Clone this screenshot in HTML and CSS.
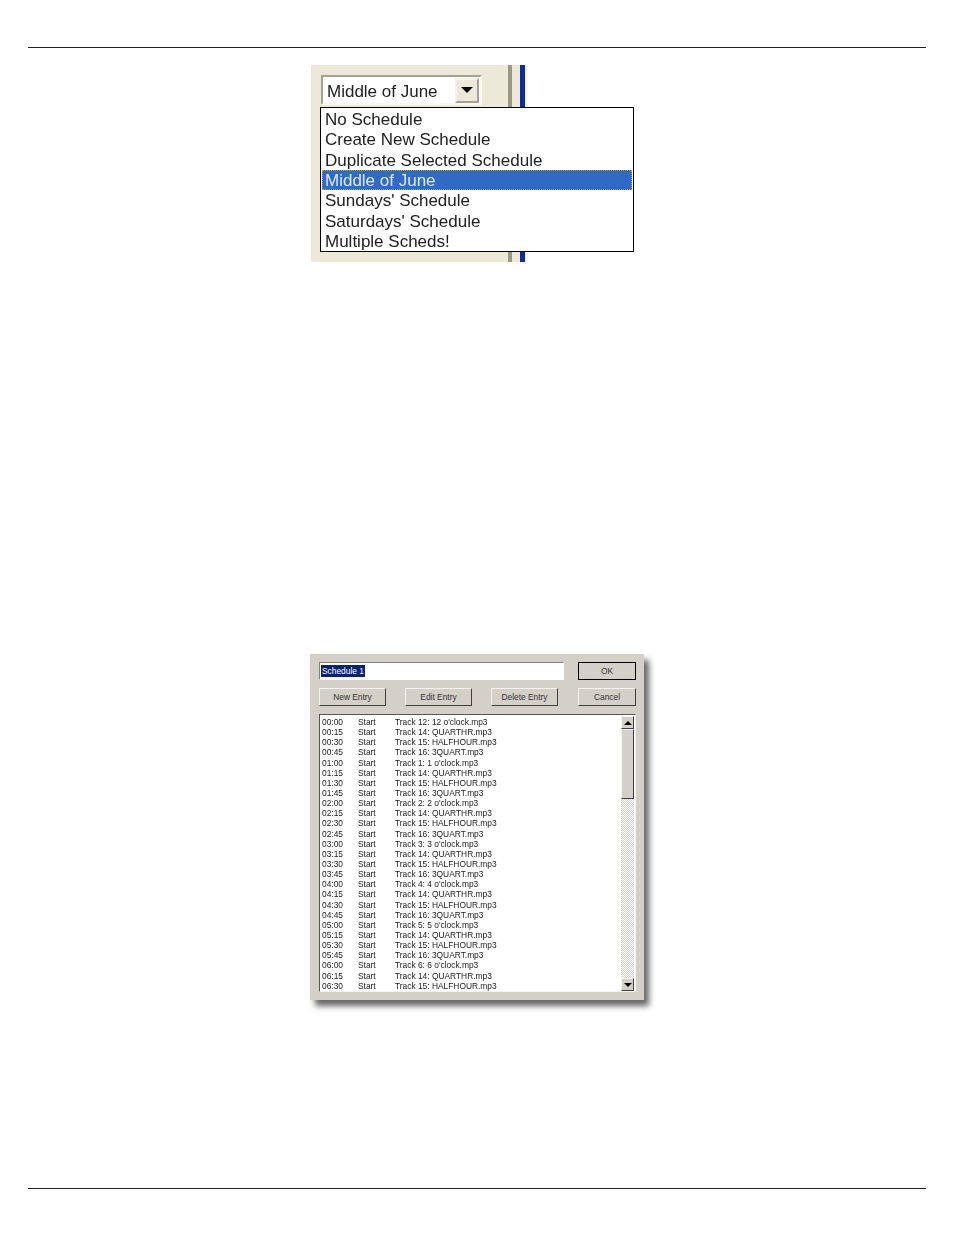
FILE: index.html
```html
<!DOCTYPE html>
<html lang="en">
<head>
    <meta charset="UTF-8">
    <title>Schedules</title>
    <link rel="stylesheet" href="styles.css">
</head>
<body>
    <div class="page">
        <hr class="rule rule-top">

        <!-- Schedule dropdown -->
        <div class="shot-dropdown">
            <div class="panel">
                <div class="combo">
                    <span class="combo-text">Middle of June</span>
                    <span class="combo-btn"><span class="arrow-down"></span></span>
                </div>
            </div>
            <div class="divider"></div>
            <div class="blue-line"></div>
            <ul class="popup">
                <li>No Schedule</li>
                <li>Create New Schedule</li>
                <li>Duplicate Selected Schedule</li>
                <li class="selected">Middle of June</li>
                <li>Sundays' Schedule</li>
                <li>Saturdays' Schedule</li>
                <li>Multiple Scheds!</li>
            </ul>
        </div>

        <!-- Schedule editor dialog -->
        <div class="dialog">
            <div class="dialog-row">
                <div class="name-input"><span class="name-selected">Schedule 1</span></div>
                <button class="btn btn-default">OK</button>
            </div>
            <div class="dialog-row">
                <div class="entry-btns">
                    <button class="btn btn-entry">New Entry</button>
                    <button class="btn btn-entry">Edit Entry</button>
                    <button class="btn btn-entry">Delete Entry</button>
                </div>
                <button class="btn">Cancel</button>
            </div>
            <div class="list-box">
                <div class="rows">
                    <div class="row"><span>00:00</span><span>Start</span><span>Track 12: 12 o'clock.mp3</span></div>
                    <div class="row"><span>00:15</span><span>Start</span><span>Track 14: QUARTHR.mp3</span></div>
                    <div class="row"><span>00:30</span><span>Start</span><span>Track 15: HALFHOUR.mp3</span></div>
                    <div class="row"><span>00:45</span><span>Start</span><span>Track 16: 3QUART.mp3</span></div>
                    <div class="row"><span>01:00</span><span>Start</span><span>Track 1: 1 o'clock.mp3</span></div>
                    <div class="row"><span>01:15</span><span>Start</span><span>Track 14: QUARTHR.mp3</span></div>
                    <div class="row"><span>01:30</span><span>Start</span><span>Track 15: HALFHOUR.mp3</span></div>
                    <div class="row"><span>01:45</span><span>Start</span><span>Track 16: 3QUART.mp3</span></div>
                    <div class="row"><span>02:00</span><span>Start</span><span>Track 2: 2 o'clock.mp3</span></div>
                    <div class="row"><span>02:15</span><span>Start</span><span>Track 14: QUARTHR.mp3</span></div>
                    <div class="row"><span>02:30</span><span>Start</span><span>Track 15: HALFHOUR.mp3</span></div>
                    <div class="row"><span>02:45</span><span>Start</span><span>Track 16: 3QUART.mp3</span></div>
                    <div class="row"><span>03:00</span><span>Start</span><span>Track 3: 3 o'clock.mp3</span></div>
                    <div class="row"><span>03:15</span><span>Start</span><span>Track 14: QUARTHR.mp3</span></div>
                    <div class="row"><span>03:30</span><span>Start</span><span>Track 15: HALFHOUR.mp3</span></div>
                    <div class="row"><span>03:45</span><span>Start</span><span>Track 16: 3QUART.mp3</span></div>
                    <div class="row"><span>04:00</span><span>Start</span><span>Track 4: 4 o'clock.mp3</span></div>
                    <div class="row"><span>04:15</span><span>Start</span><span>Track 14: QUARTHR.mp3</span></div>
                    <div class="row"><span>04:30</span><span>Start</span><span>Track 15: HALFHOUR.mp3</span></div>
                    <div class="row"><span>04:45</span><span>Start</span><span>Track 16: 3QUART.mp3</span></div>
                    <div class="row"><span>05:00</span><span>Start</span><span>Track 5: 5 o'clock.mp3</span></div>
                    <div class="row"><span>05:15</span><span>Start</span><span>Track 14: QUARTHR.mp3</span></div>
                    <div class="row"><span>05:30</span><span>Start</span><span>Track 15: HALFHOUR.mp3</span></div>
                    <div class="row"><span>05:45</span><span>Start</span><span>Track 16: 3QUART.mp3</span></div>
                    <div class="row"><span>06:00</span><span>Start</span><span>Track 6: 6 o'clock.mp3</span></div>
                    <div class="row"><span>06:15</span><span>Start</span><span>Track 14: QUARTHR.mp3</span></div>
                    <div class="row"><span>06:30</span><span>Start</span><span>Track 15: HALFHOUR.mp3</span></div>
                </div>
                <div class="scrollbar">
                    <div class="scroll-btn"><span class="tri-up"></span></div>
                    <div class="scroll-thumb"></div>
                    <div class="scroll-track"></div>
                    <div class="scroll-btn"><span class="tri-down"></span></div>
                </div>
            </div>
        </div>

        <hr class="rule rule-bottom">
    </div>
</body>
</html>
```

FILE: styles.css
```css
body {
    margin: 0;
    background-color: #fff;
    font-family: 'Liberation Sans', Arial, sans-serif;
    color: #000;
}
.page {
    height: 1235px;
    padding: 47px 28px 0;
    box-sizing: border-box;
    overflow: hidden;
}
.rule {
    height: 1px;
    margin: 0;
    border: 0;
    background-color: #222;
}
.rule-bottom {
    margin-top: 188px;
}

/* dropdown screenshot */
.shot-dropdown {
    position: relative;
    display: flex;
    width: 214px;
    height: 197px;
    margin: 17px 0 0 283px;
    background-color: #ece9d8;
}
.panel {
    width: 197px;
    padding: 10px 0 0 10px;
    box-sizing: border-box;
}
.divider {
    width: 4px;
    background-color: #9a9888;
    margin-right: 8px;
}
.blue-line {
    width: 5px;
    background-color: #0a2aa8;
}
.combo {
    display: flex;
    align-items: center;
    justify-content: space-between;
    width: 161px;
    height: 30px;
    padding: 0 1px 0 4px;
    box-sizing: border-box;
    border: 2px solid;
    border-color: #a3a194 #f8f7f0 #f8f7f0 #a3a194;
    background-color: #fff;
    font-size: 17px;
    color: #222;
}
.combo-text {
    padding-top: 3px;
    filter: blur(0.3px);
}
.combo-btn {
    display: flex;
    align-items: center;
    justify-content: center;
    width: 24px;
    height: 25px;
    box-sizing: border-box;
    border: 2px solid;
    border-color: #f5f4ea #a3a194 #a3a194 #f5f4ea;
    background-color: #ece9d8;
}
.arrow-down {
    width: 0;
    height: 0;
    border: 6px solid transparent;
    border-top: 6px solid #000;
    border-bottom: 0;
}
.popup {
    position: absolute;
    left: 9px;
    top: 42px;
    width: 314px;
    height: 145px;
    margin: 0;
    padding: 1px 1px 0 1px;
    box-sizing: border-box;
    list-style: none;
    border: 1px solid #000;
    background-color: #fff;
    font-size: 17px;
}
.popup li {
    height: 20.35px;
    line-height: 22.35px;
    padding-left: 3px;
    color: #222;
    filter: blur(0.3px);
    white-space: nowrap;
}
.popup .selected {
    background-color: #316ac5;
    color: #dfe8f8;
    outline: 1px dotted #b99a55;
    outline-offset: -1px;
}

/* editor dialog */
.dialog {
    width: 334px;
    height: 346px;
    margin: 392px 0 0 282px;
    padding: 8px 8px 0 9px;
    box-sizing: border-box;
    background-color: #d4d0c8;
    box-shadow: 5px 6px 6px rgba(0, 0, 0, 0.6);
    font-size: 8.4px;
    color: #222;
}
.dialog-row {
    display: flex;
    justify-content: space-between;
    margin-bottom: 8px;
}
.name-input {
    width: 245px;
    height: 18px;
    padding: 2px 1px;
    box-sizing: border-box;
    border: 1px solid;
    border-color: #808080 #fff #fff #808080;
    background-color: #fff;
    line-height: 12px;
}
.name-selected {
    display: inline-block;
    background-color: #0a246a;
    color: #fff;
    padding: 0 1px;
}
.btn {
    width: 58px;
    height: 18px;
    padding: 0;
    border: 1px solid;
    border-color: #f4f3ef #404040 #404040 #f4f3ef;
    background-color: #d4d0c8;
    font-family: inherit;
    font-size: 8.4px;
    color: #333;
}
.btn-default {
    outline: 1px solid #000;
    outline-offset: -1px;
    border-color: #000;
}
.entry-btns {
    display: flex;
    gap: 19px;
}
.btn-entry {
    width: 67px;
}
.list-box {
    display: flex;
    justify-content: space-between;
    height: 278px;
    margin-top: 2px;
    padding: 0 1px 0 2px;
    box-sizing: border-box;
    border: 1px solid;
    border-color: #555 #f4f3ef #f4f3ef #555;
    background-color: #fff;
    overflow: hidden;
}
.rows {
    padding-top: 2px;
    filter: blur(0.2px);
}
.row {
    display: grid;
    grid-template-columns: 36px 37px 1fr;
    height: 10.15px;
    line-height: 10.15px;
    white-space: nowrap;
}
.scrollbar {
    display: flex;
    flex-direction: column;
    width: 13px;
    height: 275px;
    margin-top: 1px;
}
.scroll-btn {
    display: flex;
    align-items: center;
    justify-content: center;
    height: 13px;
    flex-shrink: 0;
    box-sizing: border-box;
    border: 1px solid;
    border-color: #f4f3ef #404040 #404040 #f4f3ef;
    background-color: #d4d0c8;
}
.scroll-thumb {
    height: 70px;
    flex-shrink: 0;
    box-sizing: border-box;
    border: 1px solid;
    border-color: #f4f3ef #404040 #404040 #f4f3ef;
    background-color: #d4d0c8;
}
.scroll-track {
    flex: 1;
    background: repeating-conic-gradient(#d4d0c8 0 25%, #fff 0 50%) 0 0 / 2px 2px;
}
.tri-up, .tri-down {
    width: 0;
    height: 0;
    border: 4px solid transparent;
}
.tri-up {
    border-bottom: 4px solid #000;
    border-top: 0;
}
.tri-down {
    border-top: 4px solid #000;
    border-bottom: 0;
}
```
